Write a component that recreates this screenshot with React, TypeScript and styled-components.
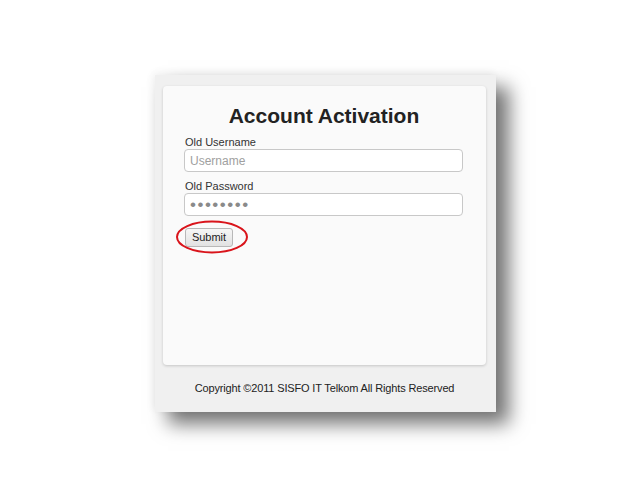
import React from "react";
import styled, { createGlobalStyle } from "styled-components";

const Global = createGlobalStyle`
  html, body { margin: 0; padding: 0; background: #fff; }
  body { font-family: "Liberation Sans", Arial, sans-serif; }
`;

const Page = styled.div`
  width: 640px;
  height: 480px;
  padding: 75px 0 0 155px;
  box-sizing: border-box;
`;

const Panel = styled.div`
  width: 341px;
  height: 337px;
  background: #f0f0f0;
  box-sizing: border-box;
  padding: 11px 10px 0 8px;
  display: flex;
  flex-direction: column;
  box-shadow: 13px 12px 18px rgba(0, 0, 0, 0.55), -2px -2px 8px rgba(0, 0, 0, 0.06);
`;

const Card = styled.div`
  height: 279px;
  background: #fafafa;
  border-radius: 4px;
  box-shadow: 0 1px 3px rgba(0, 0, 0, 0.18);
  box-sizing: border-box;
  padding: 17px 22px 0 21px;
  display: flex;
  flex-direction: column;
`;

const Title = styled.h1`
  margin: 0 0 7px 0;
  font-size: 21px;
  line-height: 26px;
  font-weight: bold;
  color: #222;
  text-align: center;
`;

const Label = styled.label`
  font-size: 11px;
  line-height: 13px;
  color: #333;
  margin-left: 1px;
`;

const Input = styled.input<{ $gap: number }>`
  width: 279px;
  height: 23px;
  box-sizing: border-box;
  border: 1px solid #c8c8c8;
  border-radius: 4px;
  background: #fff;
  padding: 0 5px;
  font-family: "Liberation Sans", Arial, sans-serif;
  font-size: 12px;
  color: #888;
  margin: 0 0 ${(p) => p.$gap}px 0;
  outline: none;
  &::placeholder { color: #a0a0a0; }
  &[type="password"] {
    font-size: 17px;
    letter-spacing: 1.5px;
    color: #8a8a8a;
  }
`;

const ButtonWrap = styled.div`
  position: relative;
  align-self: flex-start;
  margin-top: 11px;
  margin-left: 1px;
`;

const Button = styled.button`
  height: 19px;
  width: 48px;
  padding: 0;
  font-family: "Liberation Sans", Arial, sans-serif;
  font-size: 11px;
  color: #222;
  background: linear-gradient(#f6f6f6, #e2e2e2);
  border: 1px solid #b8b8b8;
  border-radius: 3px;
`;

const Ring = styled.svg`
  position: absolute;
  left: -10px;
  top: -8px;
  pointer-events: none;
`;

const Footer = styled.div`
  flex: 1;
  display: flex;
  align-items: flex-start;
  justify-content: center;
  padding-top: 17px;
  font-size: 11px;
  letter-spacing: -0.15px;
  color: #222;
`;

export default function App() {
  return (
    <>
      <Global />
      <Page>
        <Panel>
          <Card>
            <Title>Account Activation</Title>
            <Label>Old Username</Label>
            <Input $gap={8} placeholder="Username" />
            <Label>Old Password</Label>
            <Input $gap={0} type="password" defaultValue="12345678" />
            <ButtonWrap>
              <Button>Submit</Button>
              <Ring width="74" height="36" viewBox="0 0 74 36">
                <ellipse cx="37" cy="18" rx="35" ry="15.5" fill="none" stroke="#d9141b" strokeWidth="2" />
              </Ring>
            </ButtonWrap>
          </Card>
          <Footer>Copyright ©2011 SISFO IT Telkom All Rights Reserved</Footer>
        </Panel>
      </Page>
    </>
  );
}
